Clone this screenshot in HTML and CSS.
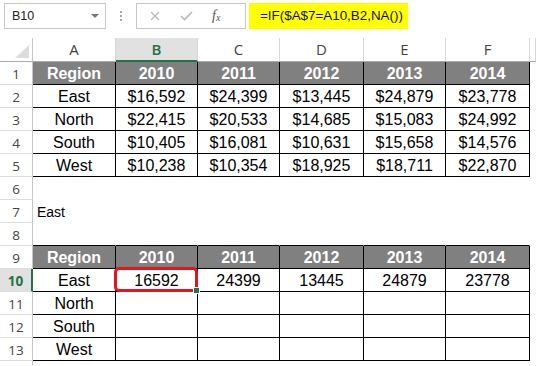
FILE: index.html
```html
<!DOCTYPE html>
<html lang="en">
<head>
<meta charset="UTF-8">
<link rel="stylesheet" href="styles.css">
</head>
<body>
  <div class="formula-bar">
    <div class="name-box">
      <span>B10</span>
      <span class="arrow"></span>
    </div>
    <div class="dots"><i></i><i></i><i></i></div>
    <div class="fx-box">
      <svg class="ico-x" width="10" height="10" viewBox="0 0 10 10"><path d="M1 1L9 9M9 1L1 9" stroke="#b8b8b8" stroke-width="1.2" fill="none"/></svg>
      <svg class="ico-ok" width="13" height="10" viewBox="0 0 13 10"><path d="M1 5L4.5 8.5L12 1" stroke="#b8b8b8" stroke-width="1.6" fill="none"/></svg>
      <span class="fx">f<sub>x</sub></span>
    </div>
    <div class="formula">=IF($A$7=A10,B2,NA())</div>
  </div>

  <div class="sheet">
    <!-- column headers -->
    <div class="corner"><span class="tri"></span></div>
    <div class="col">A</div><div class="col active">B</div><div class="col">C</div><div class="col">D</div><div class="col">E</div><div class="col">F</div><div class="col"></div>

    <!-- first table -->
    <div class="rn">1</div>
    <div class="c t th">Region</div><div class="c t th">2010</div><div class="c t th">2011</div><div class="c t th">2012</div><div class="c t th">2013</div><div class="c t th">2014</div><div class="c"></div>

    <div class="rn">2</div>
    <div class="c t">East</div><div class="c t">$16,592</div><div class="c t">$24,399</div><div class="c t">$13,445</div><div class="c t">$24,879</div><div class="c t">$23,778</div><div class="c"></div>

    <div class="rn">3</div>
    <div class="c t">North</div><div class="c t">$22,415</div><div class="c t">$20,533</div><div class="c t">$14,685</div><div class="c t">$15,083</div><div class="c t">$24,992</div><div class="c"></div>

    <div class="rn">4</div>
    <div class="c t">South</div><div class="c t">$10,405</div><div class="c t">$16,081</div><div class="c t">$10,631</div><div class="c t">$15,658</div><div class="c t">$14,576</div><div class="c"></div>

    <div class="rn">5</div>
    <div class="c t">West</div><div class="c t">$10,238</div><div class="c t">$10,354</div><div class="c t">$18,925</div><div class="c t">$18,711</div><div class="c t">$22,870</div><div class="c"></div>

    <div class="rn">6</div>
    <div class="c"></div><div class="c"></div><div class="c"></div><div class="c"></div><div class="c"></div><div class="c"></div><div class="c"></div>

    <div class="rn">7</div>
    <div class="c plain">East</div><div class="c"></div><div class="c"></div><div class="c"></div><div class="c"></div><div class="c"></div><div class="c"></div>

    <div class="rn">8</div>
    <div class="c above"></div><div class="c above"></div><div class="c above"></div><div class="c above"></div><div class="c above"></div><div class="c above"></div><div class="c"></div>

    <!-- second table -->
    <div class="rn">9</div>
    <div class="c t th">Region</div><div class="c t th">2010</div><div class="c t th">2011</div><div class="c t th">2012</div><div class="c t th">2013</div><div class="c t th">2014</div><div class="c"></div>

    <div class="rn active">10</div>
    <div class="c t">East</div><div class="c t sel">16592</div><div class="c t">24399</div><div class="c t">13445</div><div class="c t">24879</div><div class="c t">23778</div><div class="c"></div>

    <div class="rn">11</div>
    <div class="c t">North</div><div class="c t"></div><div class="c t"></div><div class="c t"></div><div class="c t"></div><div class="c t"></div><div class="c"></div>

    <div class="rn">12</div>
    <div class="c t">South</div><div class="c t"></div><div class="c t"></div><div class="c t"></div><div class="c t"></div><div class="c t"></div><div class="c"></div>

    <div class="rn">13</div>
    <div class="c t">West</div><div class="c t"></div><div class="c t"></div><div class="c t"></div><div class="c t"></div><div class="c t"></div><div class="c"></div>

    <!-- row 14, only its top edge is in view -->
    <div class="rn"></div>
    <div class="c"></div><div class="c"></div><div class="c"></div><div class="c"></div><div class="c"></div><div class="c"></div><div class="c"></div>
  </div>
</body>
</html>
```

FILE: styles.css
```css
body {
  margin: 0;
  background: #fff;
  font-family: "Liberation Sans", Arial, sans-serif;
  overflow: hidden;
}

/* formula bar */
.formula-bar {
  display: flex;
  align-items: flex-start;
  height: 38px;
  padding: 3px 0 0 4px;
  box-sizing: border-box;
}

.name-box {
  display: flex;
  align-items: center;
  justify-content: space-between;
  width: 102px;
  height: 26px;
  padding: 0 6px 0 7px;
  box-sizing: border-box;
  border: 1px solid #c6c6c6;
  font-size: 12.5px;
  color: #222;
}

.arrow {
  width: 0;
  height: 0;
  border-left: 4px solid transparent;
  border-right: 4px solid transparent;
  border-top: 4px solid #777;
}

.dots {
  width: 30px;
  height: 26px;
  display: flex;
  flex-direction: column;
  align-items: center;
  justify-content: center;
  gap: 2px;
}

.dots i {
  width: 2px;
  height: 2px;
  background: #aaa;
}

.fx-box {
  width: 110px;
  height: 26px;
  box-sizing: border-box;
  border: 1px solid #c6c6c6;
  display: flex;
  align-items: center;
  padding-left: 13px;
}

.ico-x {
  margin-right: 20px;
}

.ico-ok {
  margin-right: 19px;
}

.fx {
  font-family: "Liberation Serif", "Times New Roman", serif;
  font-style: italic;
  font-size: 14px;
  color: #555;
}

.fx sub {
  font-size: 10px;
  vertical-align: -1px;
}

.formula {
  margin-left: 3px;
  width: 159px;
  height: 26px;
  background: #ffff00;
  font-size: 13.4px;
  line-height: 26px;
  padding-left: 11px;
  box-sizing: border-box;
  color: #111;
}

/* spreadsheet grid */
.sheet {
  display: grid;
  grid-template-columns: 33px 83px 82px 82px 84px 82px 84px 1fr;
  grid-template-rows: 24px;
  grid-auto-rows: 23px;
}

.corner {
  display: flex;
  justify-content: flex-end;
  align-items: flex-end;
  padding: 0 3px 3px 0;
  border-right: 1px solid #c6c6c6;
  border-bottom: 1px solid #ababab;
}

.tri {
  width: 0;
  height: 0;
  border-left: 14px solid transparent;
  border-bottom: 13px solid #dcdcdc;
}

.col {
  font-family: "Open Sans", "Noto Sans", sans-serif;
  font-size: 15px;
  line-height: 23px;
  color: #444;
  text-align: center;
  border-right: 1px solid #d8d8d8;
  border-bottom: 1px solid #ababab;
}

.col.active {
  background: #e1e1e1;
  color: #217346;
  font-weight: 600;
  border-bottom: 2px solid #217346;
}

.rn {
  font-family: "Open Sans", "Noto Sans", sans-serif;
  font-size: 13.5px;
  line-height: 20px;
  padding-top: 2px;
  color: #444;
  text-align: center;
  border-right: 1px solid #c6c6c6;
  border-bottom: 1px solid #dcdcdc;
}

.rn.active {
  background: #e1e1e1;
  color: #217346;
  font-weight: 700;
  border-right: 2px solid #217346;
}

.c {
  font-size: 16px;
  line-height: 20px;
  padding-top: 2px;
  text-align: center;
  color: #000;
  white-space: nowrap;
  border-right: 1px solid transparent;
  border-bottom: 1px solid transparent;
}

.t {
  border-right-color: #000;
  border-bottom-color: #000;
}

.above {
  border-bottom-color: #000;
}

.th {
  background: #808080;
  color: #fff;
  font-weight: bold;
}

.plain {
  text-align: left;
  padding-left: 4px;
  font-size: 14px;
}

.sel {
  position: relative;
}

.sel::after {
  content: "";
  position: absolute;
  top: -2px;
  left: -2px;
  right: -1px;
  bottom: -1px;
  border: 3px solid #e8141b;
  border-radius: 5px;
}

.sel::before {
  content: "";
  position: absolute;
  right: -3px;
  bottom: -3px;
  width: 5px;
  height: 5px;
  background: #217346;
  border: 1px solid #fff;
  z-index: 1;
}
```
